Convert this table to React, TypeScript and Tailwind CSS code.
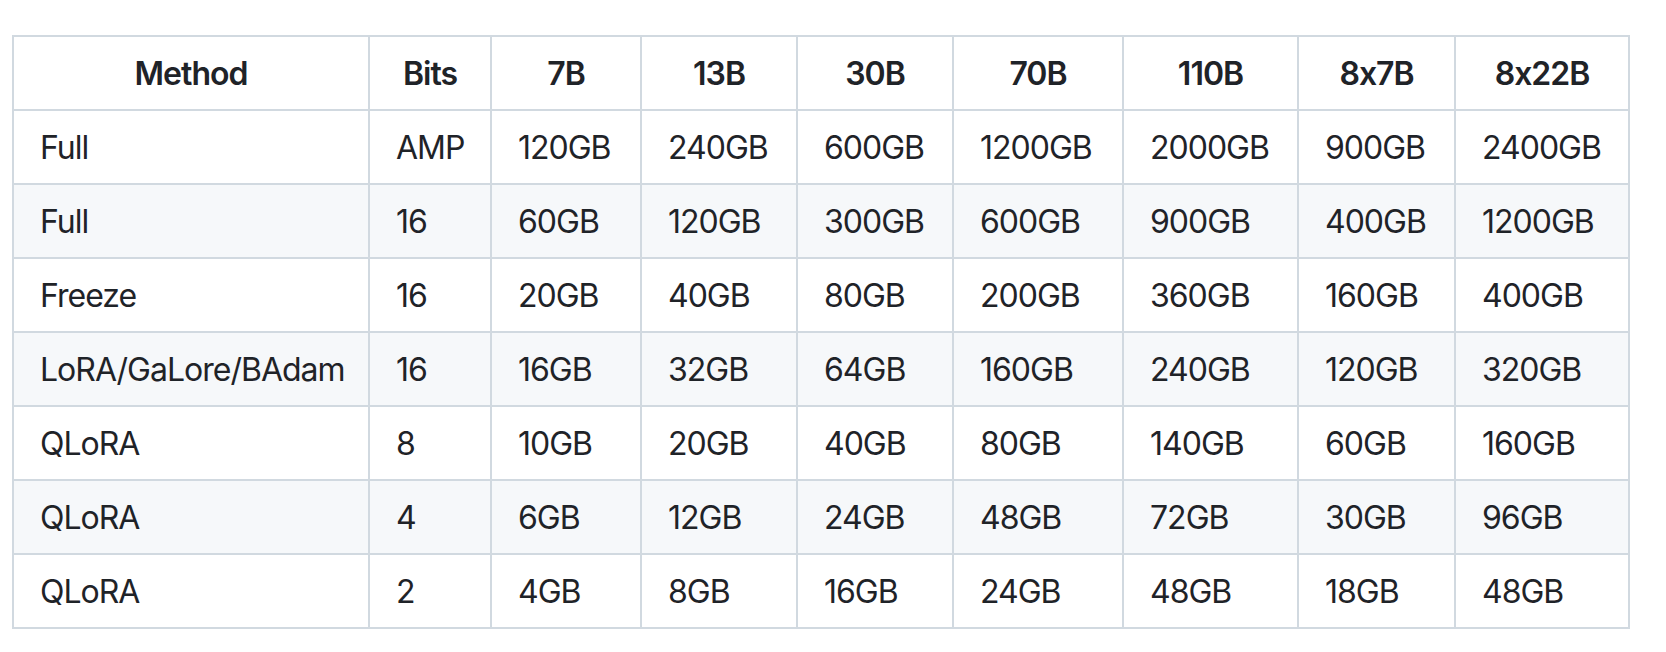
import React from "react";

const headers = ["Method", "Bits", "7B", "13B", "30B", "70B", "110B", "8x7B", "8x22B"];

const widths = [
  "w-[356px]",
  "w-[122px]",
  "w-[150px]",
  "w-[156px]",
  "w-[156px]",
  "w-[170px]",
  "w-[175px]",
  "w-[157px]",
  "w-[174px]",
];

const rows: string[][] = [
  ["Full", "AMP", "120GB", "240GB", "600GB", "1200GB", "2000GB", "900GB", "2400GB"],
  ["Full", "16", "60GB", "120GB", "300GB", "600GB", "900GB", "400GB", "1200GB"],
  ["Freeze", "16", "20GB", "40GB", "80GB", "200GB", "360GB", "160GB", "400GB"],
  ["LoRA/GaLore/BAdam", "16", "16GB", "32GB", "64GB", "160GB", "240GB", "120GB", "320GB"],
  ["QLoRA", "8", "10GB", "20GB", "40GB", "80GB", "140GB", "60GB", "160GB"],
  ["QLoRA", "4", "6GB", "12GB", "24GB", "48GB", "72GB", "30GB", "96GB"],
  ["QLoRA", "2", "4GB", "8GB", "16GB", "24GB", "48GB", "18GB", "48GB"],
];

const App = () => {
  return (
    <div className="min-h-screen bg-white pl-[12px] pt-[35px] font-['Inter',_'Liberation_Sans',_sans-serif] text-[#1f2328] [font-feature-settings:'calt'_0]">
      <table className="w-[1618px] table-fixed border-collapse text-[32px] leading-[48px] tracking-[-1px]">
        <colgroup>
          {widths.map((w, i) => (
            <col key={i} className={w} />
          ))}
        </colgroup>
        <thead>
          <tr className="bg-white">
            {headers.map((h) => (
              <th
                key={h}
                className="border-2 border-[#d1d9e0] px-[26px] pt-[13px] pb-[11px] text-center font-semibold whitespace-nowrap"
              >
                {h}
              </th>
            ))}
          </tr>
        </thead>
        <tbody>
          {rows.map((row, i) => (
            <tr key={i} className={i % 2 === 1 ? "bg-[#f6f8fa]" : "bg-white"}>
              {row.map((cell, j) => (
                <td
                  key={j}
                  className="border-2 border-[#d1d9e0] px-[26px] pt-[13px] pb-[11px] text-left whitespace-nowrap"
                >
                  {cell}
                </td>
              ))}
            </tr>
          ))}
        </tbody>
      </table>
    </div>
  );
};

export default App;
